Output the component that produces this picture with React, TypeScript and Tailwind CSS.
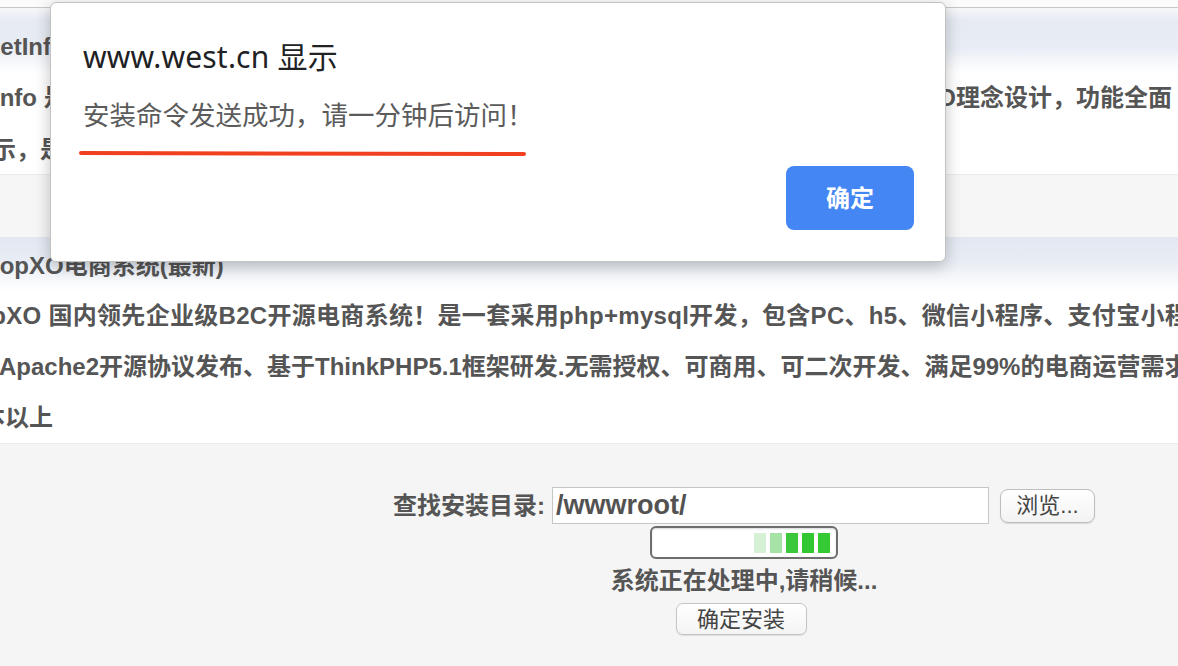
export default function App() {
  return (
    <div className="relative w-[1178px] h-[666px] overflow-hidden bg-white font-['Liberation_Sans','Noto_Sans_CJK_SC',sans-serif]">
      <div className="flex flex-col w-[1178px] h-[666px] font-bold text-[24px] text-[#555] whitespace-nowrap">
        <div className="h-[8px] shrink-0 bg-[#fbfbfb] border-b border-[#c8c8c8]" />
        {/* card 1 */}
        <div className="h-[64px] shrink-0 flex items-center pt-[13px] bg-[linear-gradient(to_bottom,#f6f7f8_0%,#e6ebf3_20%,#e8edf5_62%,#ffffff_100%)]">
          <span className="ml-[-17px]">NetInfo 企业网站管理系统</span>
        </div>
        <div className="h-[51px] shrink-0 flex items-center justify-between pr-[6px]">
          <span className="ml-[-7px]">Info 是一款企业网站管理系统，</span>
          <span>采用SEO理念设计，功能全面</span>
        </div>
        <div className="h-[52px] shrink-0 flex items-center pt-[2px] border-b border-[#eaeaea]">
          <span className="ml-[-8px]">示，是中小企业建站的理想选择。</span>
        </div>
        <div className="h-[62px] shrink-0 bg-[#f6f6f6]" />
        {/* card 2 */}
        <div className="h-[54px] shrink-0 flex items-center pt-[3px] bg-[linear-gradient(to_bottom,#e2e8f1_0%,#e8edf5_45%,#ffffff_100%)]">
          <span className="ml-[-31px]">ShopXO电商系统(最新)</span>
        </div>
        <div className="h-[50px] shrink-0 flex items-center">
          <span className="ml-[-55px] tracking-[0.3px]">ShopXO 国内领先企业级B2C开源电商系统！是一套采用php+mysql开发，包含PC、h5、微信小程序、支付宝小程序、百度小程序</span>
        </div>
        <div className="h-[51px] shrink-0 flex items-center">
          <span className="ml-[-1px]">Apache2开源协议发布、基于ThinkPHP5.1框架研发.无需授权、可商用、可二次开发、满足99%的电商运营需求</span>
        </div>
        <div className="h-[52px] shrink-0 flex items-center border-b border-[#ececec]">
          <span className="ml-[-43px]">版本以上</span>
        </div>
        {/* form */}
        <div className="flex-1 bg-[#f5f5f5]">
          <div className="w-[1488px] flex flex-col items-center pt-[43px]">
            <div className="flex items-center">
              <span className="mr-[7px]">查找安装目录:</span>
              <div className="w-[437px] h-[37px] bg-white border border-[#c6c6c6] flex items-center px-[3px] text-[27px] text-[#525252]">
                /wwwroot/
              </div>
              <button className="ml-[11px] w-[95px] h-[34px] rounded-[8px] border border-[#bdbdbd] bg-[linear-gradient(to_bottom,#ffffff,#f3f3f3)] shadow-[0_1px_1px_rgba(0,0,0,0.12)] text-[22px] font-normal text-[#444] flex items-center justify-center">
                浏览...
              </button>
            </div>
            <div className="mt-[2px] w-[188px] h-[33px] border-2 border-[#6e6e6e] rounded-[6px] bg-white flex items-center justify-end pr-[6px] gap-[4px] shadow-[inset_0_1px_2px_rgba(0,0,0,0.15)]">
              <div className="w-[12px] h-[20px] bg-[#d6f2d6]" />
              <div className="w-[12px] h-[20px] bg-[#a6e3a6]" />
              <div className="w-[12px] h-[20px] bg-[#3cc83c]" />
              <div className="w-[12px] h-[20px] bg-[#33c633]" />
              <div className="w-[12px] h-[20px] bg-[#36c936]" />
            </div>
            <div className="mt-[7px] leading-[30px]">系统正在处理中,请稍候...</div>
            <button className="mt-[7px] mr-[6px] w-[131px] h-[32px] rounded-[7px] border border-[#c4c4c4] bg-[linear-gradient(to_bottom,#ffffff,#f4f4f4)] shadow-[0_1px_1px_rgba(0,0,0,0.1)] text-[22px] font-normal text-[#444] flex items-center justify-center">
              确定安装
            </button>
          </div>
        </div>
      </div>

      {/* alert dialog */}
      <div className="absolute left-[50px] top-[2px] w-[896px] h-[260px] bg-white border border-[#c2c2c2] rounded-[6px] shadow-[0_4px_16px_rgba(0,0,0,0.24)] font-['Noto_Sans','Noto_Sans_CJK_SC',sans-serif] flex flex-col pl-[32px] pr-[31px] pt-[36px]">
        <div className="text-[30px] leading-[36px] text-[#202124] tracking-[0.2px]">www.west.cn 显示</div>
        <div className="mt-[23px] text-[26.5px] leading-[34px] text-[#5b5b5b]">安装命令发送成功，请一分钟后访问！</div>
        <div className="mt-[34px] flex justify-end">
          <button className="w-[128px] h-[64px] rounded-[8px] bg-[#4487f4] text-white text-[24px] font-bold flex items-center justify-center">
            确定
          </button>
        </div>
        <svg className="absolute left-[27px] top-[144px]" width="452" height="14" viewBox="0 0 452 14">
          <path d="M3 6 Q 220 5.5 446 7" fill="none" stroke="#f0401f" strokeWidth="4" strokeLinecap="round" />
        </svg>
      </div>
    </div>
  );
}
